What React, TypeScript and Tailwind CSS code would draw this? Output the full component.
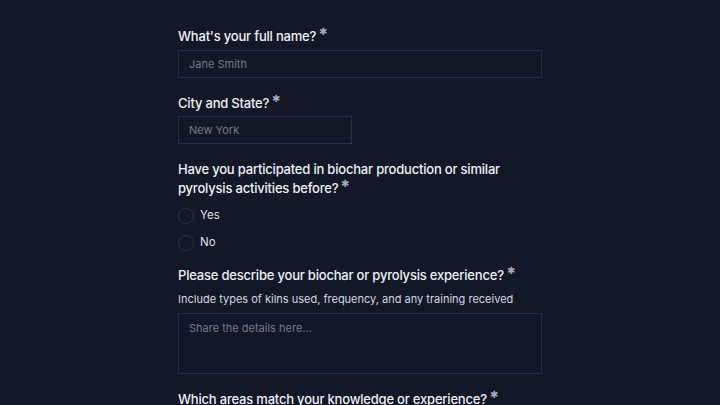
import React from 'react';

const Req = () => (
  <span className="ml-[3px] align-top text-[10px] leading-[10px] text-[#a3abbb] relative top-[-1px]">✱</span>
);

const Label = ({ children }: { children: React.ReactNode }) => (
  <div className="text-[13px] leading-[19px] font-medium tracking-[-0.2px] text-[#eef0f5]">
    {children}
    <Req />
  </div>
);

const App = () => {
  return (
    <div
      className="w-[720px] h-[405px] overflow-hidden bg-[#121827]"
      style={{ fontFamily: 'Inter, "Noto Sans", sans-serif' }}
    >
      <div className="ml-[178px] w-[364px] pt-[27px]">
        {/* Full name */}
        <Label>What's your full name?</Label>
        <div className="mt-[4px] h-[28px] border border-[#252f48] px-[10px] flex items-center text-[11px] text-[#737b8c]">
          Jane Smith
        </div>

        {/* City */}
        <div className="mt-[16px]">
          <Label>City and State?</Label>
        </div>
        <div className="mt-[3px] h-[28px] w-[174px] border border-[#252f48] px-[10px] flex items-center text-[11px] text-[#737b8c]">
          New York
        </div>

        {/* Participation */}
        <div className="mt-[16px]">
          <Label>
            Have you participated in biochar production or similar pyrolysis activities before?
          </Label>
        </div>
        <div className="mt-[10px] flex flex-col gap-[11px]">
          {['Yes', 'No'].map((o) => (
            <div key={o} className="flex items-center gap-[6px] h-[16px]">
              <span className="w-[16px] h-[16px] rounded-full border border-[#2a3248]" />
              <span className="text-[11.5px] text-[#dfe2ea]">{o}</span>
            </div>
          ))}
        </div>

        {/* Experience */}
        <div className="mt-[15px]">
          <Label>Please describe your biochar or pyrolysis experience?</Label>
        </div>
        <div className="mt-[6px] text-[11px] leading-[16px] text-[#d4d8e1]">
          Include types of kilns used, frequency, and any training received
        </div>
        <div className="mt-[6px] h-[61px] border border-[#252f48] px-[10px] pt-[6px] text-[11px] text-[#737b8c]">
          Share the details here...
        </div>

        {/* Areas */}
        <div className="mt-[16px]">
          <Label>Which areas match your knowledge or experience?</Label>
        </div>
      </div>
    </div>
  );
};

export default App;
